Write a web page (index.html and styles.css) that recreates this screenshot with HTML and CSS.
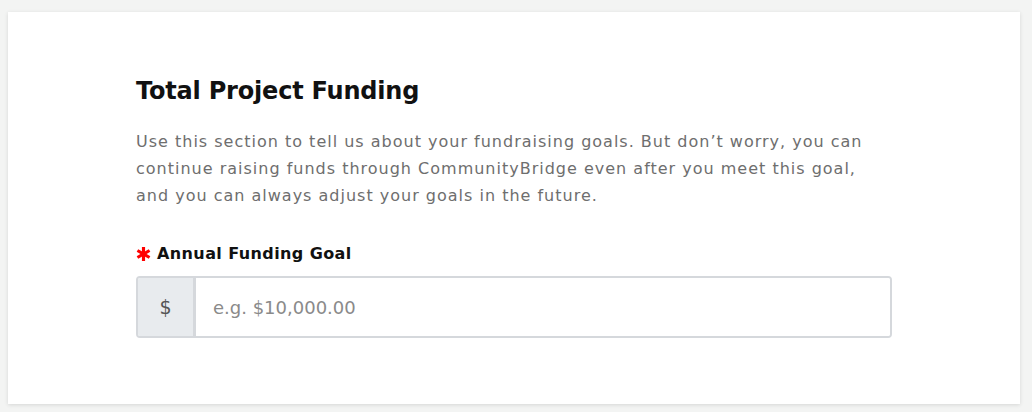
FILE: index.html
```html
<!DOCTYPE html>
<html lang="en">
<head>
<meta charset="utf-8">
<title>Total Project Funding</title>
<link rel="stylesheet" href="styles.css">
</head>
<body>
<main class="card">
  <section class="section">
    <h2 class="title">Total Project Funding</h2>
    <p class="desc">Use this section to tell us about your fundraising goals. But don’t worry, you can continue raising funds through CommunityBridge even after you meet this goal, and you can always adjust your goals in the future.</p>
    <label class="label" for="goal"><svg class="req" viewBox="0 0 16 16" width="15" height="14" aria-hidden="true"><g stroke="#f00" stroke-width="3.6" stroke-linecap="butt"><line x1="8" y1="0" x2="8" y2="16"/><line x1="1.1" y1="4" x2="14.9" y2="12"/><line x1="1.1" y1="12" x2="14.9" y2="4"/></g></svg><span>Annual Funding Goal</span></label>
    <div class="input-group">
      <span class="prefix">$</span>
      <input id="goal" class="input" type="text" placeholder="e.g. $10,000.00">
    </div>
  </section>
</main>
</body>
</html>
```
FILE: styles.css
```css
html, body {
  margin: 0;
  padding: 0;
}
body {
  background: #f3f4f3;
  padding: 12px 12px 8px 8px;
  font-family: "DejaVu Sans", "Noto Sans", sans-serif;
}
.card {
  background: #fff;
  height: 392px;
  box-sizing: border-box;
  box-shadow: 0 1px 4px rgba(0, 0, 0, 0.12);
  padding: 63px 128px 0;
}
.section {
  width: 756px;
}
.title {
  margin: 0;
  font-size: 24px;
  line-height: 32px;
  font-weight: 700;
  letter-spacing: -0.2px;
  color: #111;
}
.desc {
  max-width: 732px;
  margin: 21px 0 0;
  font-size: 16px;
  line-height: 27px;
  letter-spacing: 1px;
  color: #6e6e6e;
}
.label {
  display: flex;
  align-items: center;
  margin-top: 34px;
  font-size: 16px;
  line-height: 22px;
  font-weight: 700;
  letter-spacing: 0.4px;
  color: #111;
}
.req {
  flex: none;
  margin-right: 6px;
}
.input-group {
  display: flex;
  margin-top: 11px;
  height: 62px;
  box-sizing: border-box;
  border: 2px solid #d5d8dc;
  border-radius: 4px;
  overflow: hidden;
}
.prefix {
  width: 55px;
  flex: none;
  display: flex;
  align-items: center;
  justify-content: center;
  background: #e8ebee;
  border-right: 3px solid #d5d8dc;
  font-size: 19px;
  color: #555;
}
.input {
  flex: 1;
  border: 0;
  outline: none;
  padding: 0 17px;
  font-family: inherit;
  font-size: 18px;
  color: #333;
  background: #fff;
}
.input::placeholder {
  color: #8a8a8a;
}
```
